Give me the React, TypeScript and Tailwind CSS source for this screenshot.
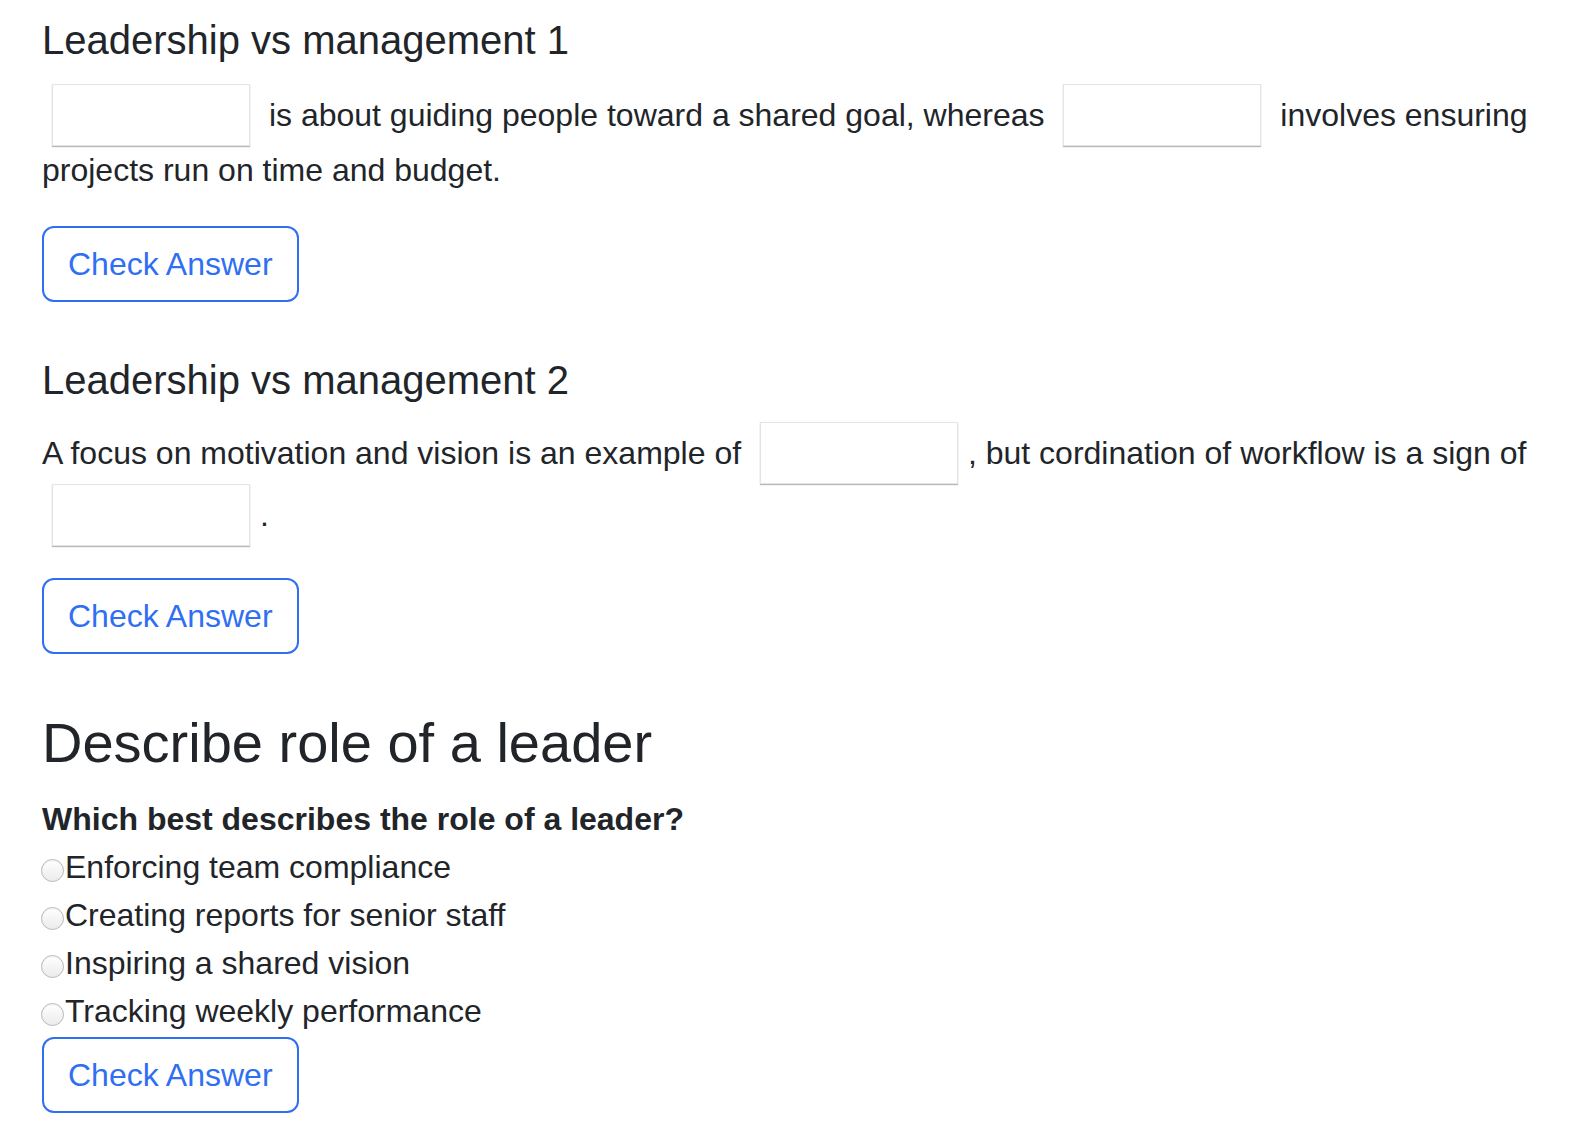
import React from "react";

function Blank() {
  return (
    <input
      type="text"
      aria-label="answer"
      className="inline-block w-[198px] h-[62px] mx-[10px] border border-[#e4e4e4] bg-white shadow-[0_1px_1px_rgba(0,0,0,0.28)] rounded-none outline-none text-[32px] px-2 align-baseline"
    />
  );
}

function CheckButton({ className = "" }: { className?: string }) {
  return (
    <button
      type="button"
      className={
        "block h-[76px] px-[24px] border-2 border-[#2f6ff2] rounded-[12px] bg-white text-[#2f6ff2] text-[32px] leading-[48px] " +
        className
      }
    >
      Check Answer
    </button>
  );
}

const options = [
  "Enforcing team compliance",
  "Creating reports for senior staff",
  "Inspiring a shared vision",
  "Tracking weekly performance",
];

export default function App() {
  return (
    <div
      className="min-h-[1148px] bg-white text-[#212529] pt-4 px-[42px] pb-8"
      style={{ fontFamily: '"Liberation Sans", Arial, Helvetica, sans-serif' }}
    >
      <section>
        <h5 className="text-[40px] leading-[48px] font-normal mb-[20px]">Leadership vs management 1</h5>
        <p className="text-[32px] leading-[48px] mb-8">
          <Blank /> is about guiding people toward a shared goal, whereas <Blank /> involves ensuring
          projects run on time and budget.
        </p>
        <CheckButton />
      </section>

      <section className="mt-[54px]">
        <h5 className="text-[40px] leading-[48px] font-normal mb-[18px]">Leadership vs management 2</h5>
        <p className="text-[32px] leading-[48px] mb-8">
          A focus on motivation and vision is an example of <Blank />, but cordination of workflow is a sign of <Blank />.
        </p>
        <CheckButton />
      </section>

      <section className="mt-[55px]">
        <h3 className="text-[56px] leading-[1.2] font-normal mb-[19px]">Describe role of a leader</h3>
        <div className="text-[32px] leading-[48px] font-bold">Which best describes the role of a leader?</div>
        <div className="text-[32px] leading-[48px]">
          {options.map((o) => (
            <label key={o} className="flex items-start cursor-pointer">
              <input
                type="radio"
                name="leader"
                className="appearance-none shrink-0 w-[23px] h-[23px] mt-[16px] -ml-px mr-px rounded-full border border-[#b9b9b9] bg-gradient-to-b from-white to-[#ebebeb] shadow-[inset_0_1px_1px_rgba(0,0,0,0.06)]"
              />
              <span>{o}</span>
            </label>
          ))}
        </div>
        <CheckButton className="mt-[2px]" />
      </section>
    </div>
  );
}
